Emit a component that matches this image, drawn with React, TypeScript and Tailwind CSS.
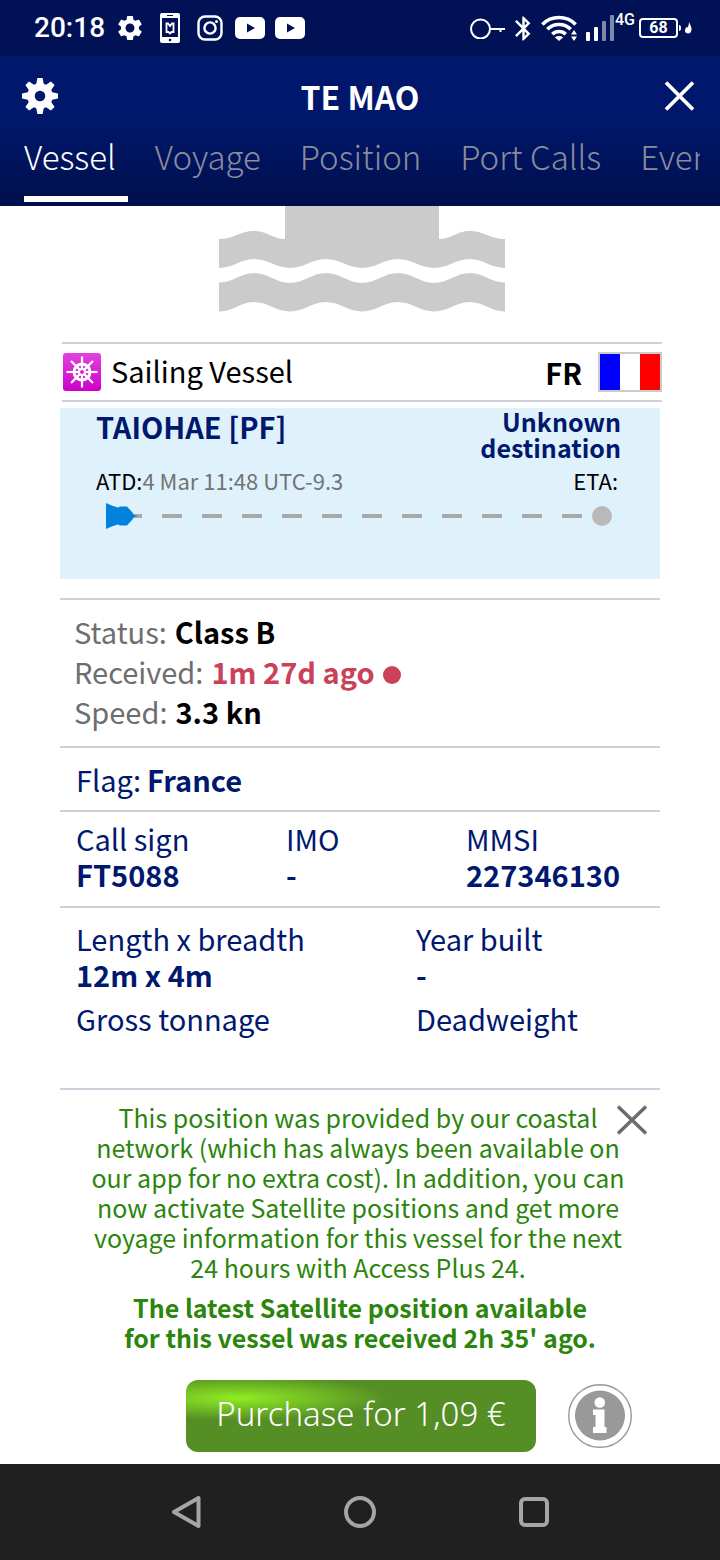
import { MdBluetooth, MdSettings } from "react-icons/md"

const tabs = ["Vessel", "Voyage", "Position", "Port Calls", "Events"]

const identity = [
  { label: "Call sign", value: "FT5088" },
  { label: "IMO", value: "-" },
  { label: "MMSI", value: "227346130" },
]

const dimensions = [
  { label: "Length x breadth", value: "12m x 4m" },
  { label: "Year built", value: "-" },
  { label: "Gross tonnage", value: "" },
  { label: "Deadweight", value: "" },
]

const angles = [0, 45, 90, 135, 180, 225, 270, 315]

function YoutubeIcon() {
  return (
    <svg width="30" height="22" viewBox="0 0 30 22">
      <rect width="30" height="22" rx="5" fill="#fff" />
      <path d="M12 6.500L20 11L12 15.500Z" fill="#001155" />
    </svg>
  )
}

function StatusBar() {
  return (
    <div className="flex h-14 items-center justify-between bg-[#001155] pl-[34px] pr-7 font-[Roboto,sans-serif] text-white">
      <div className="flex items-center">
        <span className="text-[28px] leading-8 font-medium">20:18</span>
        <MdSettings size={30} className="ml-[10px]" />
        <svg width="20" height="30" viewBox="0 0 20 30" className="ml-[15px]">
          <rect width="20" height="30" rx="2" fill="#fff" />
          <rect x="2" y="5" width="16" height="19" fill="#001155" />
          <path d="M7 2.500H13" stroke="#001155" />
          <circle cx="10" cy="27" r="1.300" fill="#001155" />
          <path d="M6.500 19V10.500H8L10 13L12 10.500H13.500V19H11.500L10 20.500L8.500 19Z" fill="none" stroke="#fff" strokeWidth="1.800" />
        </svg>
        <svg width="26" height="26" viewBox="0 0 26 26" fill="none" stroke="#fff" strokeWidth="2.400" className="ml-[17px]">
          <rect x="1.500" y="1.500" width="23" height="23" rx="6.500" />
          <circle cx="13" cy="13" r="5.600" />
          <circle cx="19.500" cy="6.500" r="1.500" fill="#fff" stroke="none" />
        </svg>
        <div className="ml-3 flex gap-[10px]">
          <YoutubeIcon />
          <YoutubeIcon />
        </div>
      </div>
      <div className="flex items-center">
        <svg width="36" height="22" viewBox="0 0 36 22" fill="none" stroke="#fff" strokeWidth="2">
          <circle cx="10.500" cy="12" r="9.500" />
          <path d="M20 12H35M30.500 12V15" />
        </svg>
        <MdBluetooth size={29} className="ml-[3px]" />
        <svg width="38" height="28" viewBox="0 0 38 28" fill="none" stroke="#fff" strokeWidth="3.600" className="ml-[3px]">
          <path d="M1.400 10.400A23.500 23.500 0 0 1 34.600 10.400M6.300 15.300A16.500 16.500 0 0 1 29.700 15.300M11.300 20.300A9.500 9.500 0 0 1 24.700 20.300" />
          <path d="M18 27L13.800 23.300Q18 20.500 22.200 23.300Z" fill="#fff" stroke="none" />
          <path d="M30 20.500L33 16L36 20.500ZM30 22.500H36L33 27Z" fill="#fff" stroke="none" />
        </svg>
        <svg width="28" height="26" viewBox="0 0 28 26" fill="#fff" className="ml-[7px]">
          <rect x="0" y="17" width="4" height="9" rx="1" />
          <rect x="8" y="12" width="4" height="14" rx="1" />
          <rect x="16" y="6" width="4" height="20" rx="1" opacity="0.500" />
          <rect x="24" y="0" width="4" height="26" rx="1" opacity="0.500" />
        </svg>
        <span className="ml-px pb-4 text-base leading-4 font-medium">4G</span>
        <span className="ml-1 flex h-5 w-[39px] items-center justify-center rounded border-2 border-white text-base leading-4 font-bold">68</span>
        <svg width="14" height="14" viewBox="0 0 14 14" fill="#fff">
          <path d="M1 4Q3 4 3 7Q3 10 1 10Z" />
          <path d="M11 1Q14 7 13.500 9Q13 12.500 10 12.500Q6.500 12 7 9Q7.300 7 9 5.500L9.500 7Q11 4.500 11 1Z" />
        </svg>
      </div>
    </div>
  )
}

function Header() {
  return (
    <header className="bg-linear-to-b from-[#00176b] from-45% to-[#000f4b] pb-1 text-white">
      <div className="flex h-[76px] items-center justify-between px-[22px] pt-1">
        <button aria-label="Settings">
          <svg width="36" height="36" viewBox="-18 -18 36 36">
            {angles.map(a => (
              <path key={a} d="M-4 -11L-2.600 -18H2.600L4 -11Z" fill="#fff" transform={`rotate(${a})`} />
            ))}
            <circle r="9" fill="none" stroke="#fff" strokeWidth="7.400" />
          </svg>
        </button>
        <h1 className="text-[32px] leading-10 font-bold">TE MAO</h1>
        <button aria-label="Close">
          <svg width="36" height="30" viewBox="0 0 36 30" stroke="#fff" strokeWidth="3.800">
            <path d="M4 1.500L31 28.500M31 1.500L4 28.500" />
          </svg>
        </button>
      </div>
      <nav className="mr-5 ml-6 flex gap-[27px] overflow-hidden">
        {tabs.map((tab, i) => (
          <button
            key={tab}
            className={`shrink-0 border-b-6 pr-3 pb-4 text-[33px] leading-12 font-light ${i === 0 ? "border-white text-white" : "border-transparent text-[#8a8c9c]"}`}
          >
            {tab}
          </button>
        ))}
      </nav>
    </header>
  )
}

function ShipSilhouette() {
  return (
    <svg width="286" height="106" viewBox="0 0 286 106" fill="#cbcbcb">
      <path d="M66 0H220V33C233 33 237 25 251 25C265 25 271 33 286 33V62C271 62 265 53 251 53C237 53 229 62 215 62C201 62 193 53 179 53C165 53 157 62 143 62C129 62 121 53 107 53C93 53 85 62 71 62C57 62 49 53 35 53C21 53 15 62 0 62V33C15 33 21 25 35 25C49 25 53 33 66 33Z" />
      <path d="M0 76.500C15 76.500 21 67 35 67C49 67 57 77 71 77C85 77 93 67 107 67C121 67 129 77 143 77C157 77 165 67 179 67C193 67 201 77 215 77C229 77 237 67 251 67C265 67 271 76.500 286 76.500V105.500C271 105.500 265 96 251 96C237 96 229 105.500 215 105.500C201 105.500 193 96 179 96C165 96 157 105.500 143 105.500C129 105.500 121 96 107 96C93 96 85 105.500 71 105.500C57 105.500 49 96 35 96C21 96 15 105.500 0 105.500Z" />
    </svg>
  )
}

function VesselType() {
  return (
    <div className="-mr-[2px] ml-[2px] flex h-15 items-center justify-between border-y-2 border-[#cdd0da]">
      <div className="flex items-center pl-px">
        <svg width="38" height="38" viewBox="-19 -19 38 38" fill="none" stroke="#fff">
          <defs>
            <linearGradient id="wheel" x2="0" y2="1">
              <stop offset="0" stopColor="#e044dc" />
              <stop offset="1" stopColor="#cc00cc" />
            </linearGradient>
          </defs>
          <rect x="-19" y="-19" width="38" height="38" rx="3" fill="url(#wheel)" stroke="none" />
          <circle r="8" strokeWidth="3" />
          <circle r="3" strokeWidth="2" />
          {angles.map(a => (
            <path key={a} d="M0 -3V-15.500" strokeWidth="2.200" transform={`rotate(${a})`} />
          ))}
        </svg>
        <span className="pb-1 pl-[10px] text-[29px] leading-9 text-black">Sailing Vessel</span>
      </div>
      <div className="flex items-center">
        <span className="pr-4 text-[29px] leading-9 font-bold text-black">FR</span>
        <div className="flex h-10 w-16 border-2 border-[#cccccc]">
          <span className="flex-1 bg-[#0000ff]" />
          <span className="flex-1 bg-white" />
          <span className="flex-1 bg-[#ff0000]" />
        </div>
      </div>
    </div>
  )
}

function Route() {
  return (
    <section className="mt-[6px] bg-[#dff2fc] px-9 pb-[49px]">
      <div className="flex justify-between font-bold text-[#00186e]">
        <h2 className="text-[29px] leading-9">TAIOHAE [PF]</h2>
        <p className="w-40 pr-[3px] text-right text-[25px] leading-[26px]">Unknown destination</p>
      </div>
      <div className="mt-[6px] flex justify-between pr-[6px] text-[22px] leading-7 text-[#737373]">
        <p><span className="text-black">ATD:</span>4 Mar 11:48 UTC-9.3</p>
        <p className="text-black">ETA:</p>
      </div>
      <div className="relative mt-2 flex h-7 items-center pr-3 pl-[26px]">
        <div className="h-1 flex-1 bg-[repeating-linear-gradient(90deg,#a9a9a9_0_20px,transparent_20px_40px)]" />
        <span className="size-5 rounded-full bg-[#b9b9b9]" />
        <svg width="32" height="26" viewBox="0 0 32 26" className="absolute top-[1px] left-[10px]">
          <path d="M0 0L7 3L12 4.500L14 3.500H21L26 9L28 12L32 13L28 14L26 17L21 22.500H14L12 21.500L7 23L0 26Z" fill="#0082dc" />
        </svg>
      </div>
    </section>
  )
}

function StatusRow({ label, value }: { label: string; value: string }) {
  return (
    <p className="flex items-center gap-2 text-[#6e6e6e]">
      {label} <b className="text-black">{value}</b>
    </p>
  )
}

function Details() {
  return (
    <div className="mt-[19px] text-[29px] text-[#00186e]">
      <section className="border-t-2 border-[#cdd0da] px-[14px] pt-[11px] pb-[15px] leading-10">
        <StatusRow label="Status:" value="Class B" />
        <p className="flex items-center gap-2 text-[#6e6e6e]">
          Received: <b className="text-[#c9425a]">1m 27d ago</b>
          <span className="mt-2 size-[18px] rounded-full bg-[#c9425a]" />
        </p>
        <StatusRow label="Speed:" value="3.3 kn" />
      </section>
      <section className="flex h-16 items-center gap-[6px] border-t-2 border-[#cdd0da] px-4 leading-9">
        Flag: <b>France</b>
      </section>
      <dl className="grid grid-cols-[210fr_180fr_178fr] border-t-2 border-[#cdd0da] px-4 pt-2 pb-[14px] leading-9">
        {identity.map(item => (
          <div key={item.label}>
            <dt>{item.label}</dt>
            <dd className="font-bold">{item.value}</dd>
          </div>
        ))}
      </dl>
      <dl className="grid grid-cols-[340fr_228fr] gap-y-2 border-t-2 border-[#cdd0da] px-4 pt-3 pb-4 leading-9">
        {dimensions.map(item => (
          <div key={item.label}>
            <dt>{item.label}</dt>
            <dd className="h-9 font-bold">{item.value}</dd>
          </div>
        ))}
      </dl>
    </div>
  )
}

function SatelliteOffer() {
  return (
    <section className="relative border-t-2 border-[#cdd0da] pt-3 text-center text-[25px] leading-[30px] text-[#2c850c]">
      <button aria-label="Dismiss" className="absolute top-[15px] right-3">
        <svg width="32" height="30" viewBox="0 0 32 30" stroke="#6c6c6c" strokeWidth="3.500">
          <path d="M2 1.500L30 28.500M30 1.500L2 28.500" />
        </svg>
      </button>
      <p className="pr-8 pl-7">
        This position was provided by our coastal network (which has always been available on our app for no extra cost). In addition, you can now activate Satellite positions and get more voyage information for this vessel for the next 24 hours with Access Plus 24.
      </p>
      <p className="mt-[10px] px-14 font-bold">The latest Satellite position available for this vessel was received 2h 35' ago.</p>
      <div className="mt-7 mb-3 flex items-center justify-end gap-8 pr-7">
        <button className="h-18 w-[350px] rounded-xl bg-[#568e26] bg-[radial-gradient(ellipse_150px_22px_at_52px_18px,#8fee22,#568e26)] pb-1 font-['Noto_Sans',sans-serif] text-[33px] leading-10 font-light text-white">
          Purchase for 1,09 €
        </button>
        <button aria-label="Information">
          <svg width="64" height="64" viewBox="0 0 64 64">
            <circle cx="32" cy="32" r="31.300" fill="#fff" stroke="#999" strokeWidth="1.400" />
            <circle cx="32" cy="31.500" r="25" fill="#999" />
            <circle cx="31.800" cy="18.500" r="5.300" fill="#fff" />
            <path d="M25 25.500H36.500V43H38.500V49H25V43H27.500V31H25Z" fill="#fff" />
          </svg>
        </button>
      </div>
    </section>
  )
}

function NavigationBar() {
  return (
    <nav className="mt-auto flex h-24 items-center justify-center gap-[142px] bg-[#202020]">
      <button aria-label="Back">
        <svg width="32" height="34" viewBox="0 0 32 34" fill="none" stroke="#a5a5a5" strokeWidth="4" strokeLinejoin="round">
          <path d="M4 17L28.500 3V31Z" />
        </svg>
      </button>
      <button aria-label="Home">
        <svg width="32" height="32" viewBox="0 0 32 32" fill="none" stroke="#a5a5a5" strokeWidth="4">
          <circle cx="16" cy="16" r="14" />
        </svg>
      </button>
      <button aria-label="Recent apps">
        <svg width="32" height="32" viewBox="0 0 32 32" fill="none" stroke="#a5a5a5" strokeWidth="4">
          <rect x="3" y="3" width="26" height="26" rx="4" />
        </svg>
      </button>
    </nav>
  )
}

export default function App() {
  return (
    <div className="flex min-h-screen flex-col bg-white font-['Noto_Sans_CJK_SC',sans-serif]">
      <StatusBar />
      <Header />
      <main className="px-15">
        <div className="flex justify-center pb-[30px] pl-1">
          <ShipSilhouette />
        </div>
        <VesselType />
        <Route />
        <Details />
        <SatelliteOffer />
      </main>
      <NavigationBar />
    </div>
  )
}
